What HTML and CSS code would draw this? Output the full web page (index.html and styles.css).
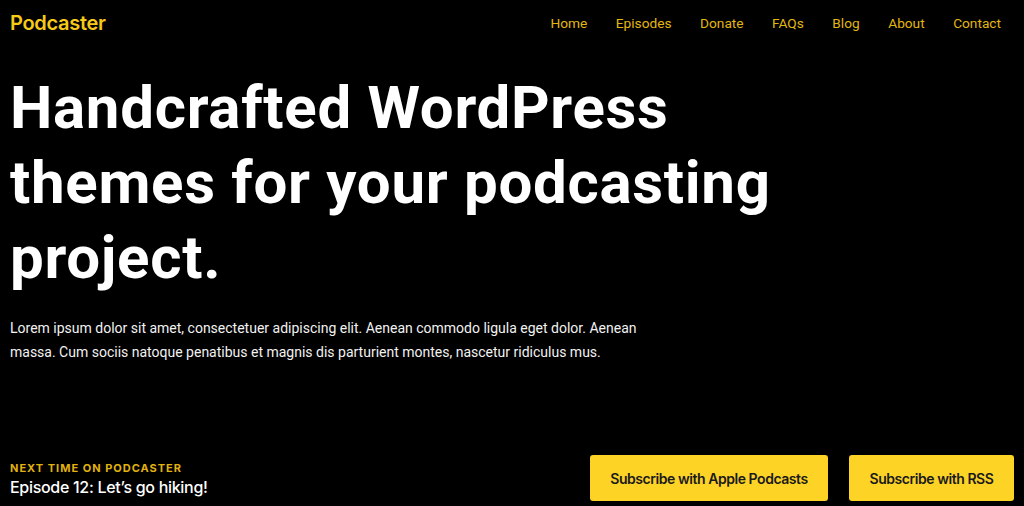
FILE: index.html
```html
<!DOCTYPE html>
<html lang="en">
<head>
<meta charset="utf-8">
<title>Podcaster</title>
<link rel="stylesheet" href="styles.css">
</head>
<body>
<div class="page">
  <header class="site-header">
    <a class="logo" href="#">Podcaster</a>
    <nav class="nav">
      <a href="#">Home</a>
      <a href="#">Episodes</a>
      <a href="#">Donate</a>
      <a href="#">FAQs</a>
      <a href="#">Blog</a>
      <a href="#">About</a>
      <a href="#">Contact</a>
    </nav>
  </header>

  <main class="hero">
    <h1 class="hero-title">Handcrafted WordPress themes for your podcasting project.</h1>
    <p class="hero-text">Lorem ipsum dolor sit amet, consectetuer adipiscing elit. Aenean commodo ligula eget dolor. Aenean massa. Cum sociis natoque penatibus et magnis dis parturient montes, nascetur ridiculus mus.</p>
  </main>

  <footer class="next-bar">
    <div class="next">
      <div class="next-label">Next time on Podcaster</div>
      <div class="next-title">Episode 12: Let’s go hiking!</div>
    </div>
    <div class="actions">
      <a class="btn btn-apple" href="#">Subscribe with Apple Podcasts</a>
      <a class="btn btn-rss" href="#">Subscribe with RSS</a>
    </div>
  </footer>
</div>
</body>
</html>
```

FILE: styles.css
```css
* { box-sizing: border-box; }

html, body {
  margin: 0;
  background: #000;
  height: 100%;
}

body {
  font-family: Roboto, "Liberation Sans", sans-serif;
  color: #fff;
}

a { text-decoration: none; }

.page {
  height: 506px;
  display: flex;
  flex-direction: column;
  padding: 0 10px;
}

.site-header {
  display: flex;
  justify-content: space-between;
  align-items: center;
  height: 46px;
}

.logo {
  font-family: Inter, sans-serif;
  font-size: 20px;
  font-weight: 600;
  color: #f7c919;
  letter-spacing: -0.3px;
}

.nav {
  display: flex;
  gap: 28.5px;
  padding-right: 13px;
}

.nav a {
  font-family: Roboto, sans-serif;
  font-size: 13.7px;
  color: #e2b710;
}

.hero {
  flex: 1;
}

.hero-title {
  font-family: Roboto, sans-serif;
  font-weight: 700;
  font-size: 60px;
  line-height: 75px;
  letter-spacing: 0.7px;
  margin: 24px 0 0;
  max-width: 790px;
}

.hero-text {
  font-size: 14px;
  line-height: 24px;
  margin: 21px 0 0;
  max-width: 660px;
  color: #f2f2f2;
}

.next-bar {
  display: flex;
  justify-content: space-between;
  align-items: flex-end;
  padding-bottom: 5px;
}

.next {
  padding-bottom: 3px;
}

.next-label {
  font-family: Inter, sans-serif;
  font-size: 11px;
  font-weight: 700;
  letter-spacing: 1px;
  text-transform: uppercase;
  color: #e0b20e;
  line-height: 14px;
}

.next-title {
  font-family: Inter, sans-serif;
  font-size: 16px;
  font-weight: 500;
  line-height: 22px;
  margin-top: 1px;
  letter-spacing: -0.3px;
}

.actions {
  display: flex;
  gap: 21px;
}

.btn {
  display: flex;
  align-items: center;
  justify-content: center;
  height: 46px;
  background: #fdd325;
  color: #1a1a1a;
  border-radius: 3px;
  font-family: Inter, sans-serif;
  font-size: 14px;
  font-weight: 600;
  white-space: nowrap;
  letter-spacing: -0.45px;
}

.btn-apple { width: 238px; }
.btn-rss { width: 165px; }
```
